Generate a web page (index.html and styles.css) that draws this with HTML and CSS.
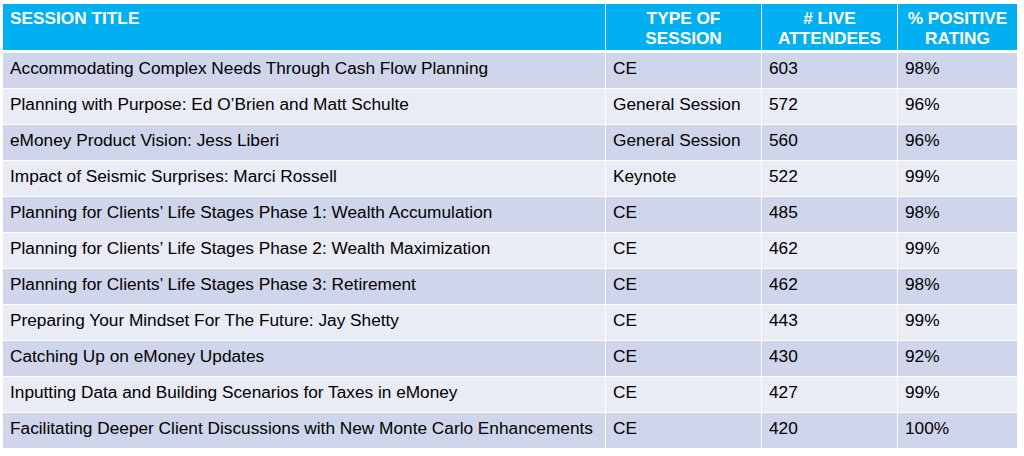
FILE: index.html
```html
<!DOCTYPE html>
<html>
<head>
<meta charset="utf-8">
<link rel="stylesheet" href="styles.css">
</head>
<body>
<div class="table">
  <div class="cell head left">SESSION TITLE</div>
  <div class="cell head">TYPE OF<br>SESSION</div>
  <div class="cell head"># LIVE<br>ATTENDEES</div>
  <div class="cell head">% POSITIVE<br>RATING</div>

  <div class="cell odd">Accommodating Complex Needs Through Cash Flow Planning</div>
  <div class="cell odd">CE</div>
  <div class="cell odd">603</div>
  <div class="cell odd">98%</div>

  <div class="cell even">Planning with Purpose: Ed O’Brien and Matt Schulte</div>
  <div class="cell even">General Session</div>
  <div class="cell even">572</div>
  <div class="cell even">96%</div>

  <div class="cell odd">eMoney Product Vision: Jess Liberi</div>
  <div class="cell odd">General Session</div>
  <div class="cell odd">560</div>
  <div class="cell odd">96%</div>

  <div class="cell even">Impact of Seismic Surprises: Marci Rossell</div>
  <div class="cell even">Keynote</div>
  <div class="cell even">522</div>
  <div class="cell even">99%</div>

  <div class="cell odd">Planning for Clients’ Life Stages Phase 1: Wealth Accumulation</div>
  <div class="cell odd">CE</div>
  <div class="cell odd">485</div>
  <div class="cell odd">98%</div>

  <div class="cell even">Planning for Clients’ Life Stages Phase 2: Wealth Maximization</div>
  <div class="cell even">CE</div>
  <div class="cell even">462</div>
  <div class="cell even">99%</div>

  <div class="cell odd">Planning for Clients’ Life Stages Phase 3: Retirement</div>
  <div class="cell odd">CE</div>
  <div class="cell odd">462</div>
  <div class="cell odd">98%</div>

  <div class="cell even">Preparing Your Mindset For The Future: Jay Shetty</div>
  <div class="cell even">CE</div>
  <div class="cell even">443</div>
  <div class="cell even">99%</div>

  <div class="cell odd">Catching Up on eMoney Updates</div>
  <div class="cell odd">CE</div>
  <div class="cell odd">430</div>
  <div class="cell odd">92%</div>

  <div class="cell even">Inputting Data and Building Scenarios for Taxes in eMoney</div>
  <div class="cell even">CE</div>
  <div class="cell even">427</div>
  <div class="cell even">99%</div>

  <div class="cell odd">Facilitating Deeper Client Discussions with New Monte Carlo Enhancements</div>
  <div class="cell odd">CE</div>
  <div class="cell odd">420</div>
  <div class="cell odd">100%</div>
</div>
</body>
</html>
```
FILE: styles.css
```css
html, body {
  margin: 0;
  padding: 0;
  background: #ffffff;
}
body {
  padding: 4px 0 0 3px;
  font-family: "Liberation Sans", Arial, sans-serif;
}
.table {
  display: grid;
  grid-template-columns: 602px 155px 135px 119px;
  grid-template-rows: 48px repeat(11, 35px);
  column-gap: 1px;
  row-gap: 1px;
  width: 1014px;
}
.cell {
  font-size: 17.25px;
  line-height: 20px;
  color: #000000;
  padding: 5px 7px 0 7px;
  white-space: nowrap;
}
.head {
  background: #00b0f0;
  color: #ffffff;
  font-weight: bold;
  text-align: center;
  line-height: 20px;
  padding-top: 4px;
  margin-bottom: 2px;
}
.head.left {
  text-align: left;
}
.odd {
  background: #cfd5ea;
}
.even {
  background: #e9ebf5;
}
```
